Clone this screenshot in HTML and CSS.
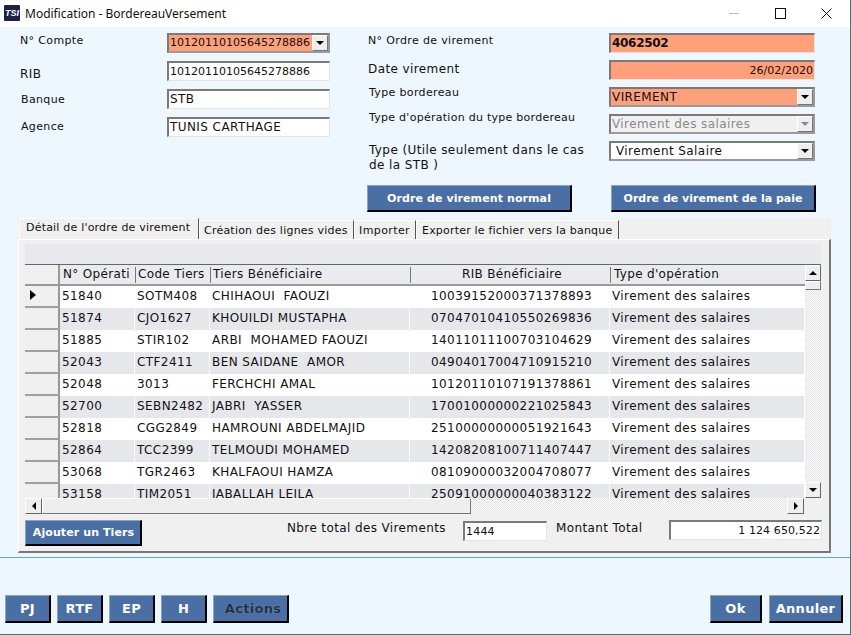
FILE: index.html
```html
<!DOCTYPE html>
<html lang="fr">
<head>
<meta charset="utf-8">
<title>Modification - BordereauVersement</title>
<link rel="stylesheet" href="styles.css">
</head>
<body>
<div class="window">
  <header class="titlebar">
    <div class="logo"><span>TSI</span></div>
    <div class="title">Modification - BordereauVersement</div>
    <div class="winctl">
      <svg class="min" width="11" height="11" viewBox="0 0 11 11"><path d="M0 5.5H10" stroke="#bbb" fill="none"/></svg>
      <svg class="max" width="11" height="11" viewBox="0 0 11 11"><rect x=".5" y=".5" width="10" height="10" stroke="#111" fill="none"/></svg>
      <svg class="cls" width="11" height="11" viewBox="0 0 11 11"><path d="M.5 .5L10.5 10.5M10.5 .5L.5 10.5" stroke="#111" fill="none"/></svg>
    </div>
  </header>

  <section class="form">
    <div class="colleft">
      <label class="lbl l1">N° Compte</label>
      <div class="combo peach"><span class="val num">10120110105645278886</span><span class="arrowbtn"><i class="tri down"></i></span></div>
      <label class="lbl big l2">RIB</label>
      <div class="field num">10120110105645278886</div>
      <label class="lbl l3">Banque</label>
      <div class="field">STB</div>
      <label class="lbl l4">Agence</label>
      <div class="field">TUNIS CARTHAGE</div>
    </div>
    <div class="colright">
      <div class="rgrid">
        <label class="lbl r1">N° Ordre de virement</label>
        <div class="field peach strong">4062502</div>
        <label class="lbl big r2">Date virement</label>
        <div class="field peach end num">26/02/2020</div>
        <label class="lbl r3">Type bordereau</label>
        <div class="combo peach"><span class="val">VIREMENT</span><span class="arrowbtn"><i class="tri down"></i></span></div>
        <label class="lbl r4">Type d'opération du type bordereau</label>
        <div class="combo off"><span class="val">Virement des salaires</span><span class="arrowbtn"><i class="tri down"></i></span></div>
        <label class="lbl big r5">Type (Utile seulement dans le cas de la STB )</label>
        <div class="combo pad"><span class="val">Virement Salaire</span><span class="arrowbtn"><i class="tri down"></i></span></div>
      </div>
      <div class="actions">
        <button class="btn wide">Ordre de virement normal</button>
        <button class="btn wide">Ordre de virement de la paie</button>
      </div>
    </div>
  </section>

  <section class="panel">
    <nav class="tabs">
      <div class="tab active">Détail de l'ordre de virement</div>
      <div class="tab t2">Création des lignes vides</div>
      <div class="tab t3">Importer</div>
      <div class="tab t4">Exporter le fichier vers la banque</div>
    </nav>
    <div class="page">
      <div class="grid">
        <div class="band"></div>
        <div class="gridmain">
          <div class="gridcols">
            <div class="row head">
              <div class="rh"></div>
              <div class="c c1">N° Opérati</div><div class="c c2">Code Tiers</div><div class="c c3">Tiers Bénéficiaire</div><div class="c c4 mid">RIB Bénéficiaire</div><div class="c c5">Type d'opération</div>
            </div>
            <div class="rows">
              <div class="row"><div class="rh"><i class="tri toright cur"></i></div><div class="c c1">51840</div><div class="c c2">SOTM408</div><div class="c c3">CHIHAOUI  FAOUZI</div><div class="c c4">10039152000371378893</div><div class="c c5">Virement des salaires</div></div>
              <div class="row alt"><div class="rh"></div><div class="c c1">51874</div><div class="c c2">CJO1627</div><div class="c c3">KHOUILDI MUSTAPHA</div><div class="c c4">07047010410550269836</div><div class="c c5">Virement des salaires</div></div>
              <div class="row"><div class="rh"></div><div class="c c1">51885</div><div class="c c2">STIR102</div><div class="c c3">ARBI  MOHAMED FAOUZI</div><div class="c c4">14011011100703104629</div><div class="c c5">Virement des salaires</div></div>
              <div class="row alt"><div class="rh"></div><div class="c c1">52043</div><div class="c c2">CTF2411</div><div class="c c3">BEN SAIDANE  AMOR</div><div class="c c4">04904017004710915210</div><div class="c c5">Virement des salaires</div></div>
              <div class="row"><div class="rh"></div><div class="c c1">52048</div><div class="c c2">3013</div><div class="c c3">FERCHCHI AMAL</div><div class="c c4">10120110107191378861</div><div class="c c5">Virement des salaires</div></div>
              <div class="row alt"><div class="rh"></div><div class="c c1">52700</div><div class="c c2">SEBN2482</div><div class="c c3">JABRI  YASSER</div><div class="c c4">17001000000221025843</div><div class="c c5">Virement des salaires</div></div>
              <div class="row"><div class="rh"></div><div class="c c1">52818</div><div class="c c2">CGG2849</div><div class="c c3">HAMROUNI ABDELMAJID</div><div class="c c4">25100000000051921643</div><div class="c c5">Virement des salaires</div></div>
              <div class="row alt"><div class="rh"></div><div class="c c1">52864</div><div class="c c2">TCC2399</div><div class="c c3">TELMOUDI MOHAMED</div><div class="c c4">14208208100711407447</div><div class="c c5">Virement des salaires</div></div>
              <div class="row"><div class="rh"></div><div class="c c1">53068</div><div class="c c2">TGR2463</div><div class="c c3">KHALFAOUI HAMZA</div><div class="c c4">08109000032004708077</div><div class="c c5">Virement des salaires</div></div>
              <div class="row alt"><div class="rh"></div><div class="c c1">53158</div><div class="c c2">TJM2051</div><div class="c c3">JABALLAH LEILA</div><div class="c c4">25091000000040383122</div><div class="c c5">Virement des salaires</div></div>
            </div>
          </div>
          <div class="vscroll">
            <div class="sbtn"><i class="tri up"></i></div>
            <div class="vthumb"></div>
            <div class="track"></div>
            <div class="sbtn"><i class="tri down"></i></div>
          </div>
        </div>
        <div class="hscroll">
          <div class="sbtn h"><i class="tri toleft"></i></div>
          <div class="hthumb"></div>
          <div class="track"></div>
          <div class="sbtn h"><i class="tri toright"></i></div>
        </div>
      </div>
      <div class="totals">
        <button class="btn add">Ajouter un Tiers</button>
        <span class="lbl tl1">Nbre total des Virements</span>
        <div class="field count">1444</div>
        <span class="lbl tl2">Montant Total</span>
        <div class="field sum end">1 124 650,522</div>
      </div>
    </div>
  </section>

  <footer class="footer">
    <div class="fgroup">
      <button class="btn sm">PJ</button>
      <button class="btn sm">RTF</button>
      <button class="btn sm">EP</button>
      <button class="btn sm">H</button>
      <button class="btn act">Actions</button>
    </div>
    <div class="fgroup right-group">
      <button class="btn ok">Ok</button>
      <button class="btn cancel">Annuler</button>
    </div>
  </footer>
</div>
</body>
</html>
```
FILE: styles.css
```css
* { box-sizing: border-box; }
html, body { margin: 0; padding: 0; }
body { width: 851px; height: 635px; overflow: hidden; background: #fff; font-family: "DejaVu Sans", Verdana, sans-serif; font-size: 12px; color: #111; }

.window { width: 851px; height: 635px; display: flex; flex-direction: column; background: #eef6fe; border-right: 1px solid #666; border-bottom: 1px solid #666; }

.titlebar { height: 27px; flex: none; background: #fff; display: flex; align-items: center; padding-left: 4px; }
.logo { width: 16px; height: 16px; margin-top: -1px; background: #1c2145; border-radius: 1px; color: #fff; font: italic 700 9px/16px "Liberation Sans", sans-serif; text-align: center; overflow: hidden; }
.title { margin-left: 5px; font-family: "Noto Sans", sans-serif; font-size: 12px; color: #111; margin-top: -1px; }
.winctl { margin-left: auto; display: flex; align-items: center; margin-top: -1px; }
.winctl svg { display: block; }
.min { margin-right: 35px; }
.max { margin-right: 35px; }
.cls { margin-right: 18px; }

.form { height: 191px; flex: none; display: flex; padding: 6px 0 0 20px; }
.colleft { width: 310px; display: grid; grid-template-columns: 147px 163px; grid-auto-rows: 20px; row-gap: 8px; align-content: start; }
.colright { margin-left: 38px; width: 449px; }
.rgrid { display: grid; grid-template-columns: 241px 206px; grid-template-rows: 20px 20px 20px 20px 20px; row-gap: 7px; }

.lbl { font-size: 11px; letter-spacing: .35px; line-height: 14px; display: block; color: #111; }
.lbl.big { font-size: 12px; letter-spacing: .4px; }
.l1 { margin-top: 1px; }
.l2 { margin-top: 6px; }
.l3 { margin: 4px 0 0 1px; }
.l4 { margin: 3px 0 0 1px; }
.r1 { margin-top: 1px; }
.r2 { margin-top: 2px; }
.r3 { margin: -1px 0 0 1px; }
.r4 { margin: -3px 0 0 1px; letter-spacing: .27px; }
.rgrid .r5 { margin: 2px 0 0 1px; line-height: 15px; width: 225px; height: 30px; }

.field { height: 20px; background: #fff; border-style: solid; border-color: #7a7a7a #e4e4e4 #e4e4e4 #7a7a7a; border-width: 2px 1px 1px 2px; font-size: 12px; letter-spacing: .42px; line-height: 17px; padding: 0 1px; white-space: nowrap; overflow: hidden; }
.peach { background: #ffa07a; }
.strong { font-weight: 700; letter-spacing: -.3px; }
.end { text-align: right; }
.num, .combo .num { font-size: 11px; letter-spacing: 0; }

.combo { height: 20px; display: flex; background: #fff; border-style: solid; border-color: #7a7a7a #9a9a9a #9a9a9a #7a7a7a; border-width: 2px; font-size: 12px; letter-spacing: .42px; line-height: 16px; overflow: hidden; }
.combo .val { flex: 1; padding-left: 1px; white-space: nowrap; overflow: hidden; }
.combo.peach { background: #ffa07a; }
.combo.off { background: #f0f0f0; color: #8a8a8a; }
.combo.off .tri { border-top-color: #888; }
.combo.pad .val { padding-left: 5px; }
.arrowbtn { width: 16px; flex: none; background: #eee; border-style: solid; border-color: #fff #777 #777 #fff; border-width: 1px; display: flex; align-items: center; justify-content: center; }

.tri { display: block; width: 0; height: 0; border: 4px solid transparent; }
.tri.down { border-top-color: #000; border-bottom-width: 0; }
.tri.up { border-bottom-color: #000; border-top-width: 0; }
.tri.toleft { border-right-color: #000; border-left-width: 0; }
.tri.toright { border-left-color: #000; border-right-width: 0; }
.tri.cur { border-width: 5px 0 5px 6px; margin-top: -2px; }

.btn { display: block; padding: 0; margin: 0; background: #4a6fa5; color: #fff; font-family: "DejaVu Sans", Verdana, sans-serif; font-weight: 700; font-size: 11px; letter-spacing: .1px; white-space: nowrap; border-style: solid; border-color: #8ba5c8 #000 #000 #8ba5c8; border-width: 1px 2px 2px 1px; text-align: center; }

.actions { display: flex; margin-top: 24px; margin-left: -1px; }
.wide { height: 27px; width: 205px; }
.wide + .wide { margin-left: 39px; letter-spacing: 0; }

.panel { width: 813px; height: 335px; flex: none; margin-left: 18px; display: flex; flex-direction: column; }
.tabs { height: 21px; flex: none; display: flex; padding-left: 1px; align-items: flex-end; background: #f0f0f0; }
.tab { height: 19px; border-right: 1px solid #555; border-left: 1px solid #fff; border-top: 1px solid #fff; background: #f0f0f0; font-size: 11px; letter-spacing: .22px; padding: 3px 0 0 4px; white-space: nowrap; }
.tab.active { height: 21px; width: 180px; padding: 0 0 0 6px; line-height: 18px; font-size: 11px; letter-spacing: .2px; }
.t2 { width: 155px; }
.t3 { width: 62px; letter-spacing: .4px; }
.t4 { width: 203px; padding-left: 5px; letter-spacing: .2px; }

.page { height: 314px; background: #f0f0f0; border-top: 1px solid #fff; border-left: 1px solid #fff; border-right: 2px solid #777; border-bottom: 2px solid #777; padding: 4px 9px 0 6px; }

.grid { width: 796px; height: 270px; display: flex; flex-direction: column; }
.band { height: 21px; flex: none; background: #e8e9ec; border-bottom: 1px solid #666; }
.gridmain { height: 233px; flex: none; display: flex; }
.gridcols { width: 780px; display: flex; flex-direction: column; overflow: hidden; }

.row { height: 22px; flex: none; display: flex; background: #fff; }
.row.alt { background: #e6e7eb; }
.row.head { height: 21px; background: #eaebee; border-bottom: 2px solid #999; }
.rows { height: 212px; overflow: hidden; }
.rh { width: 35px; flex: none; background: #efefef; border-right: 2px solid #999; border-bottom: 2px solid #a0a0a0; display: flex; align-items: center; padding-left: 5px; }
.row.head .rh { border-bottom: 0; }
.c { border-right: 1px solid #fff; font-size: 12px; letter-spacing: .42px; line-height: 20px; padding-left: 2px; white-space: pre; overflow: hidden; }
.head .c { border-right: 0; position: relative; line-height: 19px; padding-left: 3px; letter-spacing: .33px; }
.head .c + .c::before { content: ""; display: block; position: absolute; left: 0; top: 2px; bottom: 1px; width: 1px; background: #777; }
.c1 { width: 75px; }
.c2 { width: 75px; }
.c3 { width: 200px; }
.c4 { width: 200px; padding-left: 21px; }
.head .c4 { padding-left: 4px; text-align: center; }
.c5 { width: 195px; }
.head .c5 { padding-left: 4px; }

.sbtn { width: 16px; height: 16px; flex: none; background: #eee; border-style: solid; border-color: #fff #666 #666 #fff; border-width: 1px; display: flex; align-items: center; justify-content: center; }
.sbtn.h { width: 17px; }
.track { flex: 1; background-color: #f4f4f4; background-image: repeating-conic-gradient(#e6e6e6 0 25%, #fafafa 0 50%); background-size: 2px 2px; }
.vscroll { width: 16px; flex: none; display: flex; flex-direction: column; }
.vthumb { height: 9px; flex: none; background: #eee; border: 1px solid #777; border-top-color: #fff; border-left-color: #fff; }
.hscroll { height: 16px; flex: none; width: 779px; display: flex; }
.hthumb { width: 429px; flex: none; background: #eee; border: 1px solid #777; border-top-color: #fff; border-left-color: #fff; }

.totals { display: flex; align-items: flex-start; margin-top: 6px; }
.add { width: 117px; height: 26px; font-size: 11px; padding-left: 1px; flex: none; }
.tl1 { margin: 1px 0 0 145px; width: 175px; font-size: 12px; letter-spacing: .38px; flex: none; }
.tl2 { margin: 1px 0 0 9px; width: 113px; font-size: 12px; letter-spacing: .38px; flex: none; }
.count { width: 84px; margin-top: 1px; font-size: 11px; letter-spacing: .2px; margin-left: 1px; flex: none; }
.sum { width: 153px; font-size: 11px; letter-spacing: .1px; flex: none; }

.footer { flex: 1; margin-top: 4px; border-top: 1px solid #5ba5e0; display: flex; justify-content: space-between; padding: 37px 7px 0 5px; }
.fgroup { display: flex; gap: 6px; }
.right-group { gap: 7px; }
.footer .btn { height: 28px; font-size: 13px; padding-bottom: 1px; letter-spacing: .3px; }
.sm { width: 46px; }
.footer .act { width: 76px; color: #24303f; text-shadow: 0 0 1px #8ba5c8; padding-left: 5px; }
.ok { width: 52px; }
.cancel { width: 74px; }
```
